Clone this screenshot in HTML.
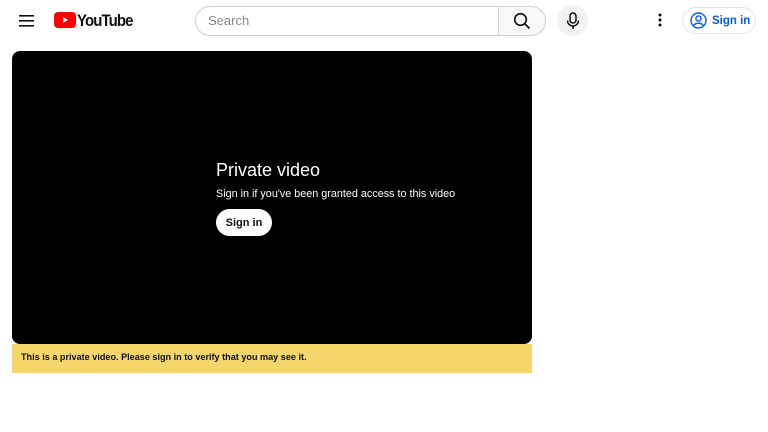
<!DOCTYPE html>
<html><head><meta charset="utf-8"><style>
*{margin:0;padding:0;box-sizing:border-box}
body{width:768px;height:432px;background:#fff;font-family:"Liberation Sans",Roboto,sans-serif;position:relative;overflow:hidden}
.a{position:absolute}
</style></head><body>
<svg class="a" style="left:19px;top:14px" width="16" height="14" viewBox="0 0 16 14"><rect y="1" width="15" height="1.6" fill="#0f0f0f"/><rect y="6" width="15" height="1.6" fill="#0f0f0f"/><rect y="11" width="15" height="1.6" fill="#0f0f0f"/></svg>
<div class="a" style="left:54px;top:12px;width:22px;height:16px;background:#f00;border-radius:4px"></div>
<svg class="a" style="left:54px;top:12px" width="22" height="16"><polygon points="9,5 9,11 14,8" fill="#fff"/></svg>
<div class="a" style="left:77px;top:11px;font-size:17px;font-weight:bold;letter-spacing:-1px;color:#0f0f0f;transform:scaleX(0.88);transform-origin:left">YouTube</div>
<div class="a" style="left:195px;top:6px;width:351px;height:30px;border:1px solid #ccc;border-radius:16px"></div>
<div class="a" style="left:498px;top:6px;width:48px;height:30px;background:#f8f8f8;border:1px solid #d3d3d3;border-radius:0 16px 16px 0"></div>
<div class="a" style="left:208px;top:13px;font-size:13px;color:#888">Search</div>
<svg class="a" style="left:513px;top:12px" width="18" height="18" viewBox="0 0 18 18"><circle cx="7.5" cy="7.5" r="5.8" fill="none" stroke="#0f0f0f" stroke-width="1.6"/><line x1="11.7" y1="11.7" x2="16.5" y2="16.5" stroke="#0f0f0f" stroke-width="1.7"/></svg>
<div class="a" style="left:557px;top:5px;width:31px;height:31px;border-radius:50%;background:#f2f2f2"></div>
<svg class="a" style="left:565px;top:12px" width="16" height="18" viewBox="0 0 16 18"><rect x="5" y="1" width="6" height="10" rx="3" fill="none" stroke="#0f0f0f" stroke-width="1.5"/><path d="M2.5 8.5a5.5 5.5 0 0 0 11 0M8 14v3" fill="none" stroke="#0f0f0f" stroke-width="1.5"/></svg>
<svg class="a" style="left:658px;top:13px" width="4" height="15"><circle cx="2" cy="2" r="1.5" fill="#0f0f0f"/><circle cx="2" cy="7" r="1.5" fill="#0f0f0f"/><circle cx="2" cy="12" r="1.5" fill="#0f0f0f"/></svg>
<div class="a" style="left:682px;top:7px;width:74px;height:27px;border:1px solid #e5e5e5;border-radius:14px"></div>
<svg class="a" style="left:690px;top:12px" width="17" height="17" viewBox="0 0 17 17"><circle cx="8.5" cy="8.5" r="7.5" fill="none" stroke="#065fd4" stroke-width="1.4"/><circle cx="8.5" cy="6.5" r="2.6" fill="none" stroke="#065fd4" stroke-width="1.4"/><path d="M3.5 13.5c2-3 8-3 10 0" fill="none" stroke="#065fd4" stroke-width="1.4"/></svg>
<div class="a" style="left:712px;top:15px;font-size:11.5px;font-weight:bold;color:#065fd4">Sign in</div>
<div class="a" style="left:12px;top:51px;width:520px;height:293px;background:#000;border-radius:8px"></div>
<div class="a" style="left:216px;top:160px;font-size:18px;color:#fff">Private video</div>
<div class="a" style="left:216px;top:188px;font-size:10.8px;color:#fff">Sign in if you've been granted access to this video</div>
<div class="a" style="left:216px;top:209px;width:56px;height:27px;background:#fff;border-radius:14px;font-size:11px;font-weight:bold;color:#0f0f0f;text-align:center;line-height:28px">Sign in</div>
<div class="a" style="left:12px;top:344px;width:520px;height:29px;background:#f4d66a"></div>
<div class="a" style="left:21px;top:352px;font-size:9.1px;font-weight:bold;color:#0f0f0f">This is a private video. Please sign in to verify that you may see it.</div>
</body></html>
